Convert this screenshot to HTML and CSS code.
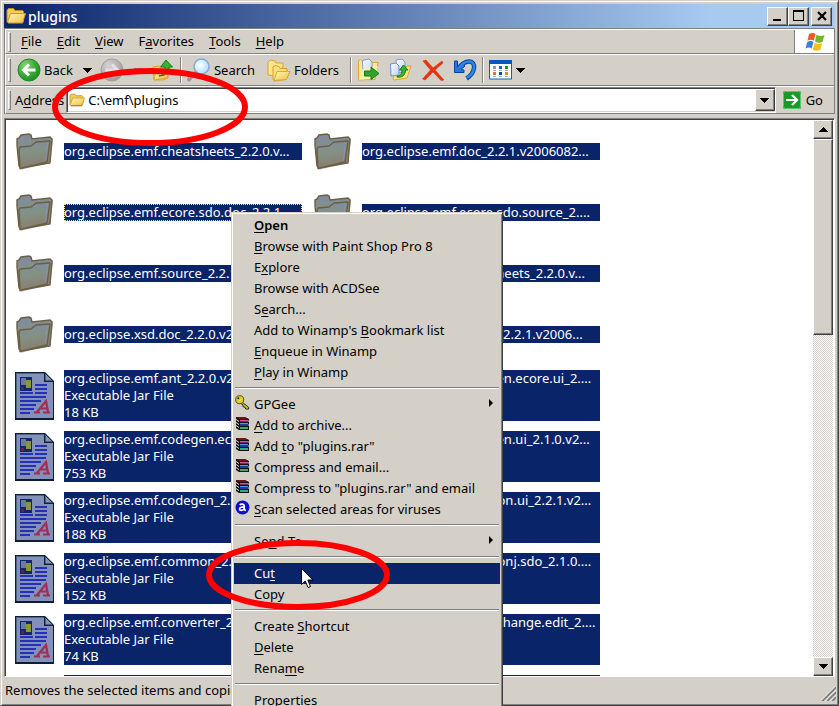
FILE: index.html
```
<!DOCTYPE html>
<html lang="en">
<head>
<meta charset="utf-8">
<title>plugins</title>
<link rel="stylesheet" href="styles.css">
</head>
<body>
<svg class="defs" aria-hidden="true">
  <defs>
    <linearGradient id="gFolder" x1="0" y1="0" x2="1" y2="1"><stop offset="0" stop-color="#fff6b8"/><stop offset="1" stop-color="#efbf45"/></linearGradient>
    <linearGradient id="gDim" x1=".1" y1="0" x2=".3" y2="1"><stop offset="0" stop-color="#8289a8"/><stop offset=".45" stop-color="#829283"/><stop offset="1" stop-color="#8b7c70"/></linearGradient>
    <radialGradient id="gGreen" cx=".35" cy=".3" r=".8"><stop offset="0" stop-color="#86d878"/><stop offset=".5" stop-color="#3fae38"/><stop offset="1" stop-color="#168a1c"/></radialGradient>
    <radialGradient id="gGrey" cx=".35" cy=".3" r=".8"><stop offset="0" stop-color="#d4d4d4"/><stop offset="1" stop-color="#979797"/></radialGradient>
    <radialGradient id="gLens" cx=".4" cy=".4" r=".7"><stop offset="0" stop-color="#fff"/><stop offset="1" stop-color="#a9d9fb"/></radialGradient>
    <linearGradient id="gPage" x1="0" y1="0" x2="1" y2="1"><stop offset="0" stop-color="#fff"/><stop offset="1" stop-color="#b9d0f5"/></linearGradient>
  </defs>
  <symbol id="folder" viewBox="0 0 20 18">
    <path d="M1 15V3l1.500-1.500h5l1.500 2h7.500l1 1V15z" fill="#f3cd5c" stroke="#c08a18"/>
    <path d="M4.500 6.500h15l-3 9.500h-14l-1-1z" fill="url(#gFolder)" stroke="#cf9a26"/>
    <path d="M2 16.500h14.500" stroke="#8f6410"/>
  </symbol>
  <symbol id="bigfolder" viewBox="0 0 38 38">
    <path d="M4 37l30-7 3-22v-2l-2-1z" fill="#777" opacity=".5"/>
    <path d="M1 12V6l2-1 2-3 8-1 2 1 1 4 18-2 2 2-2 24-29 5-2-2z" fill="url(#gDim)" stroke="#6b6047" stroke-width="1.400"/>
    <path d="M4 35.500L3 16l1-2 11-1 5-4 14-1-3 21z" fill="url(#gDim)" stroke="#6b5f40" stroke-width="1.400" stroke-linejoin="round"/>
    <path d="M31.500 9l-2 19" stroke="#8a90b4"/>
  </symbol>
  <symbol id="jar" viewBox="0 0 39 48">
    <path d="M0 0h30l9 9v39H0z" fill="#0f1c38"/>
    <path d="M1 1h28v9h9v36H1z" fill="#8390b7"/>
    <path d="M1 1h28v1H2v44H1z" fill="#4e6588"/>
    <path d="M30 1l8 8h-8z" fill="#8794ad" stroke="#14264b"/>
    <path d="M5 5h12v14H5z" fill="#13266b"/><path d="M6 6h5v7H6z" fill="#6a7c9c"/><path d="M11 8h5v8h-5z" fill="#8c943d"/><path d="M6 15h3v3H6z" fill="#7a1838"/>
    <path d="M20 12h12v2H20zM20 16h12v2H20zM20 20h12v2H20zM5 20h13v2H5zM5 24h26v2H5zM5 28h21v2H5zM5 32h16v2H5zM5 36h14v2H5zM5 40h10v2H5z" fill="#2430b8"/>
    <path d="M19 40.500h6M28 40.500h7M22 40l9-11 2 11M25 36.500h7.500" fill="none" stroke="#a32d55" stroke-width="2.200"/>
  </symbol>
  <symbol id="back" viewBox="0 0 24 24">
    <circle cx="12" cy="12" r="11" fill="url(#gGreen)" stroke="#1f8a27"/>
    <path d="M18.500 12H7M12 6.500L6.500 12l5.500 5.500" fill="none" stroke="#fff" stroke-width="3"/>
  </symbol>
  <symbol id="forward" viewBox="0 0 24 24">
    <circle cx="12" cy="12" r="11" fill="url(#gGrey)" stroke="#a0a0a0"/>
    <path d="M5.500 12H17M12 6.500l5.500 5.500-5.500 5.500" fill="none" stroke="#e4e2de" stroke-width="3"/>
  </symbol>
  <symbol id="up" viewBox="0 0 24 24">
    <path d="M2 9l6-1 1 2h8v10l-5 2H3z" fill="#f6d560" stroke="#d6a32c"/>
    <path d="M5 12l14-2-3 10-13 2z" fill="url(#gFolder)" stroke="#dba830"/>
    <path d="M8 18c5-1 6-4 6-9h-4.500L15 2l6.500 7H18c0 6-4 9-10 9z" fill="#35b52c" stroke="#14801a"/>
  </symbol>
  <symbol id="search" viewBox="0 0 24 24">
    <path d="M8 15l-6 6.500" stroke="#a08fa8" stroke-width="4" stroke-linecap="round"/><path d="M7 15l-5 5.500" stroke="#e3a27f" stroke-width="1.500"/>
    <circle cx="14.500" cy="8.500" r="7.500" fill="url(#gLens)" stroke="#7fa9e0" stroke-width="1.500"/>
  </symbol>
  <symbol id="folders" viewBox="0 0 24 24">
    <path d="M1 17V4l2-2 5 1 1 2h7v4l-9 9z" fill="#fbe48a" stroke="#d8a530"/>
    <path d="M6 21V9l2-1.500 4 1 1 2h7v3h3l-4 8-12 1.500z" fill="#fae07c" stroke="#d3a02c"/>
    <path d="M10 13.500h13l-3.500 8L7 22.500z" fill="url(#gFolder)" stroke="#d9a835"/>
  </symbol>
  <symbol id="moveto" viewBox="0 0 24 24">
    <path d="M1.500 22V3l2-1.500 3 3H21l-3 17z" fill="#fbe88f" stroke="#dba92f"/>
    <path d="M5.500 2.500L12 1l3 3v12l-9 2z" fill="url(#gPage)" stroke="#7f9ccc"/>
    <path d="M2 22L5 11l16-3-3 12z" fill="#fdf1ab" opacity=".85"/>
    <path d="M7.500 13H14V9l8 6.500-8 6V18H7.500z" fill="#2fa32b" stroke="#137d1b"/>
  </symbol>
  <symbol id="copyto" viewBox="0 0 24 24">
    <path d="M4 21l2-12 16-1-4 12-13 2z" fill="#fbe67f" stroke="#dba92f"/>
    <path d="M7 2l6-1 3 3v10l-8 1z" fill="url(#gPage)" stroke="#7f9ccc"/>
    <path d="M1.500 6L7 5l3 3v9l-8 1z" fill="url(#gPage)" stroke="#6f90c8"/>
    <path d="M8 18c4 0 5-3 5-6h-2.500l4-5 4.500 5h-2.500c0 5-3.500 8-8.500 7z" fill="#35b52c" stroke="#137d1b"/>
  </symbol>
  <symbol id="delete" viewBox="0 0 24 24">
    <path d="M2 3l3-1 7 8 9-7 1 2-8 7 9 10-3 .5-8-8.500-8 8-2.500-1 8-9z" fill="#e8340d" stroke="#d13a12" stroke-width=".6"/>
  </symbol>
  <symbol id="undo" viewBox="0 0 24 24">
    <path d="M5 11C9 5 12 3.500 16 3.500c4 0 5.500 3 5 6.500-.5 4-3.500 8-7.500 10.500" fill="none" stroke="#0b4596" stroke-width="4.500"/>
    <path d="M1.500 3h3v6L9 5l3 3-4 3.500 3 .5v2.500H1.500z" fill="#2276dc" stroke="#0b4596"/>
    <path d="M6 10C9.500 5 12 3.500 16 3.500c4 0 5.500 3 5 6.500-.5 4-3.500 8-7.500 10" fill="none" stroke="#2b85e8" stroke-width="2.500"/>
  </symbol>
  <symbol id="views" viewBox="0 0 24 20">
    <path d="M.5.5h22v18.500H.5z" fill="#fff" stroke="#0d5cc0"/>
    <path d="M0 0h23v4H0z" fill="#0a55c4"/>
    <path d="M4 6h3v3H4z" fill="#9a8ac8"/><path d="M10 6h3v3h-3z" fill="#1565d8"/><path d="M16 6h3v3h-3z" fill="#12961f"/>
    <path d="M4 12h3v3H4z" fill="#f56a3c"/><path d="M10 12h3v3h-3z" fill="#0c4aa8"/><path d="M16 12h3v3h-3z" fill="#c99a10"/>
    <path d="M4 10.500h3m3 0h3m3 0h3M4 16.500h3m3 0h3m3 0h3" stroke="#aaa"/>
  </symbol>
  <symbol id="down" viewBox="0 0 9 5" shape-rendering="crispEdges"><path d="M0 0h9L4.500 5z"/></symbol>
  <symbol id="upArrow" viewBox="0 0 9 5" shape-rendering="crispEdges"><path d="M0 5h9L4.500 0z"/></symbol>
  <symbol id="rar" viewBox="0 0 15 15">
    <path d="M1 1h9l4 2v1l-1 1 1 1v2l-1 1 1 1v4H4L1 12z" fill="#111"/>
    <path d="M1 1h8l4 2H4z" fill="#7a1010"/><path d="M5 4h8v1H5z" fill="#d05aa8"/><path d="M5 5h8v1H5z" fill="#8c1c5c"/><path d="M5 7h8v1H5z" fill="#4a9cf0"/><path d="M5 8h8v2H5z" fill="#2038a0"/><path d="M5 11h8v2H5z" fill="#2eae7c"/>
    <path d="M1 3l3 2v1L1 4zM1 6l3 2v1L1 7zM1 9l3 2v1l-3-2z" fill="#e8e8e8"/>
  </symbol>
  <symbol id="key" viewBox="0 0 16 16">
    <path d="M7.500 7.500l7 5.500v2h-3l-1-2-2-.500V10.500L6 9z" fill="#c9c012" stroke="#222"/>
    <circle cx="5" cy="5" r="4.300" fill="#d8d01c" stroke="#4d4a08"/><circle cx="3.500" cy="3.500" r="1" fill="#222"/><path d="M4 7l3-3" stroke="#fff58a"/>
  </symbol>
  <symbol id="avast" viewBox="0 0 13 13">
    <circle cx="6.500" cy="6.500" r="6" fill="#0b10c4"/>
    <path d="M4 4.200c1.500-1 4-.8 4 1v3.600M8 6.300c-2-.5-4 0-4 1.400 0 1.600 3 1.600 4 0M8 8.500l1.500.6" fill="none" stroke="#fff" stroke-width="1.500"/>
  </symbol>
</svg>

<main class="window">
  <header class="titlebar">
    <svg class="title-icon" aria-hidden="true"><use href="#folder"/></svg>
    <h1>plugins</h1>
    <div class="winbuttons">
      <button class="raised" aria-label="Minimize"><svg viewBox="0 0 16 14"><path d="M3 10h8v2H3z"/></svg></button>
      <button class="raised" aria-label="Maximize"><svg viewBox="0 0 16 14"><path d="M2 1h11v11H2zM3 3v8h9V3z" fill-rule="evenodd"/></svg></button>
      <button class="raised close" aria-label="Close"><svg viewBox="0 0 16 14"><path d="M4 3l8 8M12 3l-8 8" stroke="#000" stroke-width="2.200"/></svg></button>
    </div>
  </header>

  <section class="rebar">
    <div class="band menuband">
      <span class="grip"></span>
      <nav class="menubar">
        <button><u>F</u>ile</button><button><u>E</u>dit</button><button><u>V</u>iew</button><button>F<u>a</u>vorites</button><button><u>T</u>ools</button><button><u>H</u>elp</button>
      </nav>
      <div class="brand">
        <svg viewBox="0 0 20 20" aria-hidden="true">
          <path d="M4 2c2.500-1.500 5-1.500 6.500 0L8.800 8.800C7 7.500 4.800 7.600 2.500 8.700z" fill="#ee5a24"/>
          <path d="M11.500 2.800c2.500 1.500 5 1.400 8 .2l-2 7c-2.500 1-5 1-7.500-.5z" fill="#74b82a"/>
          <path d="M2.200 9.900c2.500-1.300 4.500-1.300 6.300 0l-1.700 6.500C5 15.300 2.800 15.400.5 16.400z" fill="#3a7fdc"/>
          <path d="M9.700 10.800c2.300 1.400 4.800 1.500 7.500.5l-2 6.600c-2.500 1.200-5 1-7.300-.5z" fill="#f5bd16"/>
        </svg>
      </div>
    </div>
    <div class="band toolbar">
      <span class="grip"></span>
      <button class="tool"><svg class="i24"><use href="#back"/></svg>Back</button>
      <button class="arrow" aria-label="Back history"><svg class="tri"><use href="#down"/></svg></button>
      <button class="tool" aria-label="Forward"><svg class="i24"><use href="#forward"/></svg></button>
      <button class="arrow dim" aria-label="Forward history"><svg class="tri"><use href="#down"/></svg></button>
      <button class="tool" aria-label="Up"><svg class="i24"><use href="#up"/></svg></button>
      <span class="sep"></span>
      <button class="tool"><svg class="i24"><use href="#search"/></svg>Search</button>
      <button class="tool gapped"><svg class="i24"><use href="#folders"/></svg>Folders</button>
      <span class="sep wide"></span>
      <div class="edits">
        <button class="tool" aria-label="Move to"><svg class="i24"><use href="#moveto"/></svg></button>
        <button class="tool" aria-label="Copy to"><svg class="i24"><use href="#copyto"/></svg></button>
        <button class="tool" aria-label="Delete"><svg class="i24"><use href="#delete"/></svg></button>
        <button class="tool" aria-label="Undo"><svg class="i24"><use href="#undo"/></svg></button>
      </div>
      <span class="sep"></span>
      <button class="tool" aria-label="Views"><svg class="iviews"><use href="#views"/></svg><svg class="tri"><use href="#down"/></svg></button>
    </div>
    <div class="band addressbar">
      <span class="grip"></span>
      <label for="address">A<u>d</u>dress</label>
      <div class="combo">
        <svg class="i16" aria-hidden="true"><use href="#folder"/></svg>
        <input id="address" type="text" value="C:\emf\plugins">
        <button class="raised" aria-label="Show addresses"><svg class="tri"><use href="#down"/></svg></button>
      </div>
      <button class="go"><svg viewBox="0 0 18 18"><rect width="18" height="18" rx="2" fill="#189a2a"/><rect x=".5" y=".5" width="17" height="17" rx="2" fill="none" stroke="#5fc468"/><path d="M3 9h10M9 4l5 5-5 5" fill="none" stroke="#fff" stroke-width="2.200"/></svg>Go</button>
    </div>
  </section>

  <section class="view">
    <ul class="files">
      <li><svg class="fold"><use href="#bigfolder"/></svg><p>org.eclipse.emf.cheatsheets_2.2.0.v...</p></li>
      <li><svg class="fold"><use href="#bigfolder"/></svg><p>org.eclipse.emf.doc_2.2.1.v2006082...</p></li>
      <li><svg class="fold"><use href="#bigfolder"/></svg><p class="focus">org.eclipse.emf.ecore.sdo.doc_2.2.1....</p></li>
      <li><svg class="fold"><use href="#bigfolder"/></svg><p>org.eclipse.emf.ecore.sdo.source_2....</p></li>
      <li><svg class="fold"><use href="#bigfolder"/></svg><p>org.eclipse.emf.source_2.2.1.v2006...</p></li>
      <li><svg class="fold"><use href="#bigfolder"/></svg><p>org.eclipse.xsd.cheatsheets_2.2.0.v...</p></li>
      <li><svg class="fold"><use href="#bigfolder"/></svg><p>org.eclipse.xsd.doc_2.2.0.v200609...</p></li>
      <li><svg class="fold"><use href="#bigfolder"/></svg><p>org.eclipse.xsd.source_2.2.1.v2006...</p></li>
      <li><svg class="jar"><use href="#jar"/></svg><p>org.eclipse.emf.ant_2.2.0.v200609...<br>Executable Jar File<br>18 KB</p></li>
      <li><svg class="jar"><use href="#jar"/></svg><p>org.eclipse.emf.codegen.ecore.ui_2....<br>Executable Jar File<br>71 KB</p></li>
      <li><svg class="jar"><use href="#jar"/></svg><p>org.eclipse.emf.codegen.ecore_2.2...<br>Executable Jar File<br>753 KB</p></li>
      <li><svg class="jar"><use href="#jar"/></svg><p>org.eclipse.emf.codegen.ui_2.1.0.v2...<br>Executable Jar File<br>51 KB</p></li>
      <li><svg class="jar"><use href="#jar"/></svg><p>org.eclipse.emf.codegen_2.2.0.v20...<br>Executable Jar File<br>188 KB</p></li>
      <li><svg class="jar"><use href="#jar"/></svg><p>org.eclipse.emf.common.ui_2.2.1.v2...<br>Executable Jar File<br>89 KB</p></li>
      <li><svg class="jar"><use href="#jar"/></svg><p>org.eclipse.emf.common_2.2.1.v20...<br>Executable Jar File<br>152 KB</p></li>
      <li><svg class="jar"><use href="#jar"/></svg><p>org.eclipse.emf.commonj.sdo_2.1.0....<br>Executable Jar File<br>42 KB</p></li>
      <li><svg class="jar"><use href="#jar"/></svg><p>org.eclipse.emf.converter_2.2.1.v2...<br>Executable Jar File<br>74 KB</p></li>
      <li><svg class="jar"><use href="#jar"/></svg><p>org.eclipse.emf.ecore.change.edit_2....<br>Executable Jar File<br>39 KB</p></li>
      <li><p>&nbsp;<br>&nbsp;<br>&nbsp;</p></li>
      <li><p>&nbsp;<br>&nbsp;<br>&nbsp;</p></li>
    </ul>
    <div class="scrollbar">
      <button class="raised" aria-label="Scroll up"><svg class="tri"><use href="#upArrow"/></svg></button>
      <div class="raised thumb"></div>
      <div class="track"></div>
      <button class="raised" aria-label="Scroll down"><svg class="tri"><use href="#down"/></svg></button>
    </div>
  </section>

  <footer class="status">
    <span>Removes the selected items and copies them</span>
    <svg viewBox="0 0 15 15" aria-hidden="true"><path d="M1 15L15 1M6 15l9-9M11 15l4-4" stroke="#808080" stroke-width="2.400"/><path d="M-.5 15L15-.5M4.300 15L15 4.300M9.300 15L15 9.300" stroke="#fff"/></svg>
  </footer>
</main>

<div class="menu" role="menu">
  <button class="default"><u>O</u>pen</button>
  <button><u>B</u>rowse with Paint Shop Pro 8</button>
  <button>E<u>x</u>plore</button>
  <button>Browse with ACDSee</button>
  <button>S<u>e</u>arch...</button>
  <button>Add to Winamp's <u>B</u>ookmark list</button>
  <button><u>E</u>nqueue in Winamp</button>
  <button><u>P</u>lay in Winamp</button>
  <hr>
  <button class="sub"><svg class="mi"><use href="#key"/></svg>GPGee</button>
  <button><svg class="mi"><use href="#rar"/></svg><u>A</u>dd to archive...</button>
  <button><svg class="mi"><use href="#rar"/></svg>Add <u>t</u>o "plugins.rar"</button>
  <button><svg class="mi"><use href="#rar"/></svg>Compress and email...</button>
  <button><svg class="mi"><use href="#rar"/></svg>Compress to "plugins.rar" and email</button>
  <button><svg class="mi"><use href="#avast"/></svg><u>S</u>can selected areas for viruses</button>
  <hr>
  <button class="sub">Se<u>n</u>d To</button>
  <hr>
  <button class="hot">Cu<u>t</u></button>
  <button><u>C</u>opy</button>
  <hr>
  <button>Create <u>S</u>hortcut</button>
  <button><u>D</u>elete</button>
  <button>Rena<u>m</u>e</button>
  <hr>
  <button>P<u>r</u>operties</button>
</div>

<svg class="ring ring-path" viewBox="0 0 198 78" aria-hidden="true"><ellipse cx="99" cy="39" rx="95" ry="36"/></svg>
<svg class="ring ring-cut" viewBox="0 0 186 72" aria-hidden="true"><ellipse cx="93" cy="36" rx="89" ry="32"/></svg>
<svg class="cursor" viewBox="0 0 13 21" aria-hidden="true"><path d="M.5.500v16l3.700-3.500 2.800 6.500 2.500-1-2.700-6.500h5z" fill="#fff" stroke="#000"/></svg>
</body>
</html>
```
FILE: styles.css
```
* { box-sizing: border-box; }
:root {
  --face: #d4d0c8;
  --dark: #404040;
  --shade: #808080;
  --navy: #0a246a;
}
html, body { height: 100%; }
body {
  margin: 0;
  overflow: hidden;
  font: 13px/17px "Noto Sans", "Liberation Sans", sans-serif;
  color: #000;
  background: var(--face);
}
button, input { font: inherit; color: inherit; }
button { margin: 0; padding: 0; border: 0; background: none; white-space: nowrap; }
svg { display: block; flex: none; }
u { text-underline-offset: 2px; text-decoration-thickness: 1px; }
.defs { position: absolute; width: 0; height: 0; }

.window {
  display: flex;
  flex-direction: column;
  height: 100vh;
  padding: 2px;
  background: var(--face);
  border: 1px solid;
  border-color: var(--face) var(--dark) var(--dark) var(--face);
  box-shadow: inset 1px 1px #fff, inset -1px -1px var(--shade);
}
.titlebar {
  display: flex;
  align-items: center;
  flex: none;
  height: 24px;
  margin: 1px 1px 0;
  padding: 0 3px 0 2px;
  color: #fff;
  background: linear-gradient(90deg, #0a246a, #a6caf0 85%);
}
.title-icon { width: 20px; height: 18px; }
.titlebar h1 { flex: 1; margin: 0 0 0 2px; font-size: 14px; font-weight: 500; }
.winbuttons { display: flex; }
.raised {
  display: flex;
  align-items: center;
  justify-content: center;
  flex: none;
  background: var(--face);
  border: 1px solid;
  border-color: #fff var(--dark) var(--dark) #fff;
  box-shadow: inset -1px -1px var(--shade);
}
.winbuttons .raised { width: 21px; height: 19px; }
.winbuttons .close { margin-left: 2px; }
.winbuttons svg { width: 16px; height: 14px; }

.rebar { flex: none; margin: 0 1px; border: 1px solid var(--shade); border-bottom: 0; }
.band {
  display: flex;
  align-items: center;
  padding-left: 2px;
  border-top: 1px solid #fff;
  border-left: 1px solid #fff;
  border-bottom: 1px solid var(--shade);
}
.grip { flex: none; width: 3px; height: 20px; border: 1px solid; border-color: #fff var(--shade) var(--shade) #fff; }
.menuband { height: 25px; }
.menubar { display: flex; flex: 1; gap: 15px; padding-left: 10px; }
.brand {
  display: flex;
  align-items: center;
  justify-content: center;
  align-self: stretch;
  width: 40px;
  background: #fff;
  border-left: 1px solid var(--shade);
}
.brand svg { width: 20px; height: 20px; }
.toolbar { height: 32px; }
.toolbar .grip { height: 24px; }
.tool { display: flex; align-items: center; gap: 3px; }
.i24 { width: 24px; height: 24px; }
.toolbar .grip + .tool { margin-left: 6px; }
.tri { width: 9px; height: 5px; }
.arrow { padding: 0 8px 0 10px; }
.dim { fill: var(--shade); }
.sep { flex: none; width: 2px; height: 26px; margin: 0 5px; border-left: 1px solid var(--shade); border-right: 1px solid #fff; }
.wide { margin-left: 11px; }
.gapped { margin-left: 12px; }
.edits { display: flex; gap: 8px; }
.iviews { width: 24px; height: 20px; }
.addressbar { height: 28px; }
.addressbar label { margin: 0 2px 0 4px; }
.combo {
  display: flex;
  align-items: center;
  flex: 1;
  height: 26px;
  padding: 1px 0 1px 2px;
  background: #fff;
  border: 1px solid;
  border-color: var(--shade) #fff #fff var(--shade);
  box-shadow: inset 1px 1px var(--dark), inset -1px -1px var(--face);
}
.i16 { width: 16px; height: 14px; }
.combo input { flex: 1; min-width: 0; padding: 0 0 0 3px; border: 0; outline: 0; background: none; }
.combo .raised { width: 20px; height: 22px; }
.go { display: flex; align-items: center; gap: 5px; padding: 0 11px 0 7px; }
.go svg { width: 18px; height: 18px; }

.view {
  display: flex;
  flex: 1;
  min-height: 0;
  margin: 4px 1px 0;
  background: #fff;
  border: 1px solid;
  border-color: var(--shade) #fff #fff var(--shade);
  box-shadow: inset 1px 1px var(--dark);
  padding: 1px 1px 0;
}
.files {
  display: grid;
  grid-template-columns: repeat(auto-fill, 298px);
  grid-auto-rows: 61px;
  flex: 1;
  min-width: 0;
  overflow: hidden;
  margin: 0;
  padding: 1px 0 0 4px;
  list-style: none;
}
.files li { display: flex; align-items: center; }
.files p {
  width: 238px;
  margin: 0 6px 0 auto;
  overflow: hidden;
  white-space: nowrap;
  color: #fff;
  background: var(--navy);
}
.files .focus { outline: 1px dotted #f5db95; outline-offset: -1px; }
.fold { width: 38px; height: 38px; margin-left: 6px; }
.jar { width: 39px; height: 48px; margin-left: 5px; }
.scrollbar { display: flex; flex-direction: column; flex: none; width: 20px; }
.scrollbar button { height: 19px; }
.thumb { flex: 35; }
.track { flex: 58; background: repeating-conic-gradient(#fff 0 25%, var(--face) 0 50%) 0 0 / 2px 2px; }

.status { display: flex; align-items: center; flex: none; height: 26px; padding-left: 2px; }
.status span { flex: 1; }
.status svg { width: 15px; height: 15px; align-self: flex-end; margin-bottom: 2px; }

.menu {
  position: absolute;
  left: 231px;
  top: 212px;
  width: 272px;
  padding: 2px;
  background: var(--face);
  border: 1px solid;
  border-color: var(--face) var(--dark) var(--dark) var(--face);
  box-shadow: inset 1px 1px #fff, inset -1px -1px var(--shade);
}
.menu button { position: relative; display: block; width: 100%; height: 21px; padding-left: 20px; text-align: left; }
.menu .default { font-weight: 600; }
.menu .hot { color: #fff; background: var(--navy); }
.menu hr { height: 2px; margin: 4px 1px 5px; border: 0; border-top: 1px solid var(--shade); border-bottom: 1px solid #fff; }
.mi { position: absolute; left: 1px; top: 1px; width: 15px; height: 15px; }
.sub::after {
  content: "";
  position: absolute;
  right: 7px;
  top: 5px;
  border: 4px solid transparent;
  border-left-color: #000;
  border-right: 0;
}

.ring { position: absolute; fill: none; stroke: #f00; stroke-width: 6px; pointer-events: none; }
.ring-path { left: 51px; top: 68px; width: 198px; height: 78px; }
.ring-cut { left: 205px; top: 539px; width: 186px; height: 72px; }
.cursor { position: absolute; left: 301px; top: 568px; width: 13px; height: 21px; }
```
